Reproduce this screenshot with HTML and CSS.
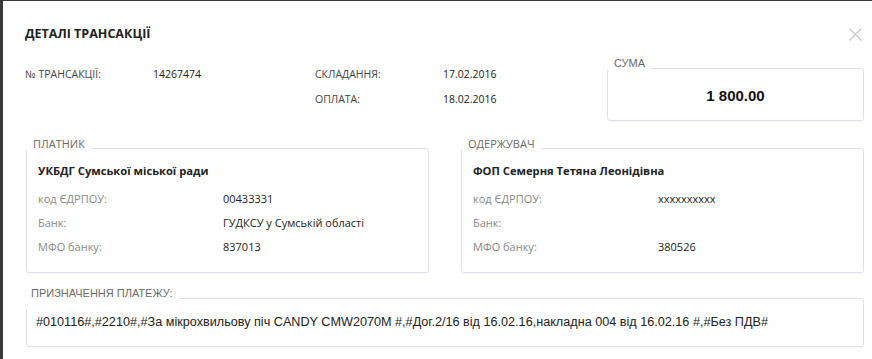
FILE: index.html
```html
<!DOCTYPE html>
<html lang="uk">
<head>
    <meta charset="UTF-8">
    <meta name="viewport" content="width=device-width, initial-scale=1.0">
    <title>Деталі трансакції</title>
    <link rel="stylesheet" href="styles.css">
</head>
<body>
    <div class="modal">
        <div class="modal-header">
            <h1>ДЕТАЛІ ТРАНСАКЦІЇ</h1>
            <span class="close" title="Закрити">
                <svg width="13" height="13" viewBox="0 0 13 13">
                    <path d="M0.5 0.5 L12.5 12.5 M12.5 0.5 L0.5 12.5" stroke="#c8c8c8" stroke-width="1.2" fill="none"/>
                </svg>
            </span>
        </div>

        <div class="summary">
            <div class="info">
                <span class="info-label">№ ТРАНСАКЦІЇ:</span>
                <span class="info-value">14267474</span>
                <span class="info-label">СКЛАДАННЯ:</span>
                <span class="info-value">17.02.2016</span>
                <span></span>
                <span></span>
                <span class="info-label">ОПЛАТА:</span>
                <span class="info-value">18.02.2016</span>
            </div>
            <fieldset class="box sum-box">
                <legend class="legend-arial">СУМА</legend>
                <div class="amount">1 800.00</div>
            </fieldset>
        </div>

        <div class="parties">
            <fieldset class="box party">
                <legend>ПЛАТНИК</legend>
                <div class="party-name">УКБДГ Сумської міської ради</div>
                <div class="party-rows">
                    <span class="party-label">код ЄДРПОУ:</span>
                    <span class="party-value">00433331</span>
                    <span class="party-label">Банк:</span>
                    <span class="party-value">ГУДКСУ у Сумській області</span>
                    <span class="party-label">МФО банку:</span>
                    <span class="party-value">837013</span>
                </div>
            </fieldset>
            <fieldset class="box party">
                <legend>ОДЕРЖУВАЧ</legend>
                <div class="party-name">ФОП Семерня Тетяна Леонідівна</div>
                <div class="party-rows">
                    <span class="party-label">код ЄДРПОУ:</span>
                    <span class="party-value">xxxxxxxxxx</span>
                    <span class="party-label">Банк:</span>
                    <span class="party-value"></span>
                    <span class="party-label">МФО банку:</span>
                    <span class="party-value">380526</span>
                </div>
            </fieldset>
        </div>

        <fieldset class="box purpose">
            <legend class="legend-arial">ПРИЗНАЧЕННЯ ПЛАТЕЖУ:</legend>
            <div class="purpose-text">#010116#,#2210#,#За мікрохвильову піч CANDY CMW2070M #,#Дог.2/16 від 16.02.16,накладна 004 від 16.02.16 #,#Без ПДВ#</div>
        </fieldset>
    </div>
</body>
</html>
```

FILE: styles.css
```css
body {
    margin: 0;
    padding: 0;
    background-color: #3a3a3a;
    font-family: "Open Sans", Arial, sans-serif;
    color: #333;
    overflow: hidden;
}

.modal {
    margin: 1px 0 0 3px;
    min-height: 358px;
    padding: 23px 8px 0 22px;
    background-color: #fff;
    box-sizing: border-box;
}

.modal-header {
    display: flex;
    justify-content: space-between;
    align-items: center;
    height: 20px;
}

h1 {
    margin: 0;
    font-size: 12.5px;
    font-weight: 700;
    line-height: 20px;
    color: #222;
}

.close {
    display: flex;
    margin-right: 2px;
    cursor: pointer;
}

/* top: transaction numbers and amount */
.summary {
    display: flex;
    justify-content: space-between;
    align-items: flex-start;
    margin-top: 10px;
}

.info {
    display: grid;
    grid-template-columns: 128px 162px 128px auto;
    row-gap: 9px;
    padding-top: 12px;
    font-size: 10.5px;
    line-height: 16px;
}

.info-label {
    color: #444;
}

.info-value {
    color: #222;
}

.box {
    margin: 0;
    border: 1px solid #dde1ea;
    border-radius: 3px;
    box-shadow: 0 1px 2px rgba(0, 0, 0, 0.04);
}

.box legend {
    margin-left: -11px;
    padding: 0 6px 9px;
    font-size: 11px;
    line-height: 13px;
    color: #6a6a6a;
}

.box legend.legend-arial {
    font-family: "Liberation Sans", Arial, sans-serif;
}

.sum-box {
    width: 257px;
    box-sizing: border-box;
    margin-top: 3px;
    padding: 7px 11px 14px;
}

.amount {
    text-align: center;
    font-family: "Liberation Sans", Arial, sans-serif;
    font-size: 15px;
    font-weight: 700;
    line-height: 20px;
    color: #111;
}

/* payer / receiver */
.parties {
    display: grid;
    grid-template-columns: 1fr 1fr;
    column-gap: 32px;
    margin: 16px 0 0 1px;
}

.party {
    padding: 4px 11px 17px;
    min-width: 0;
}

.party-name {
    font-size: 11.2px;
    font-weight: 700;
    line-height: 16px;
    color: #222;
}

.party-rows {
    display: grid;
    grid-template-columns: 185px auto;
    row-gap: 8px;
    margin-top: 12px;
    font-size: 11px;
    line-height: 16px;
}

.party-label {
    color: #888;
}

.party-value {
    color: #222;
    min-height: 16px;
}

/* purpose */
.purpose {
    margin: 14px 0 0 1px;
    padding: 5px 9px 16px;
}

.purpose-text {
    font-family: "Liberation Sans", Arial, sans-serif;
    font-size: 12.65px;
    line-height: 16px;
    color: #222;
}
```
